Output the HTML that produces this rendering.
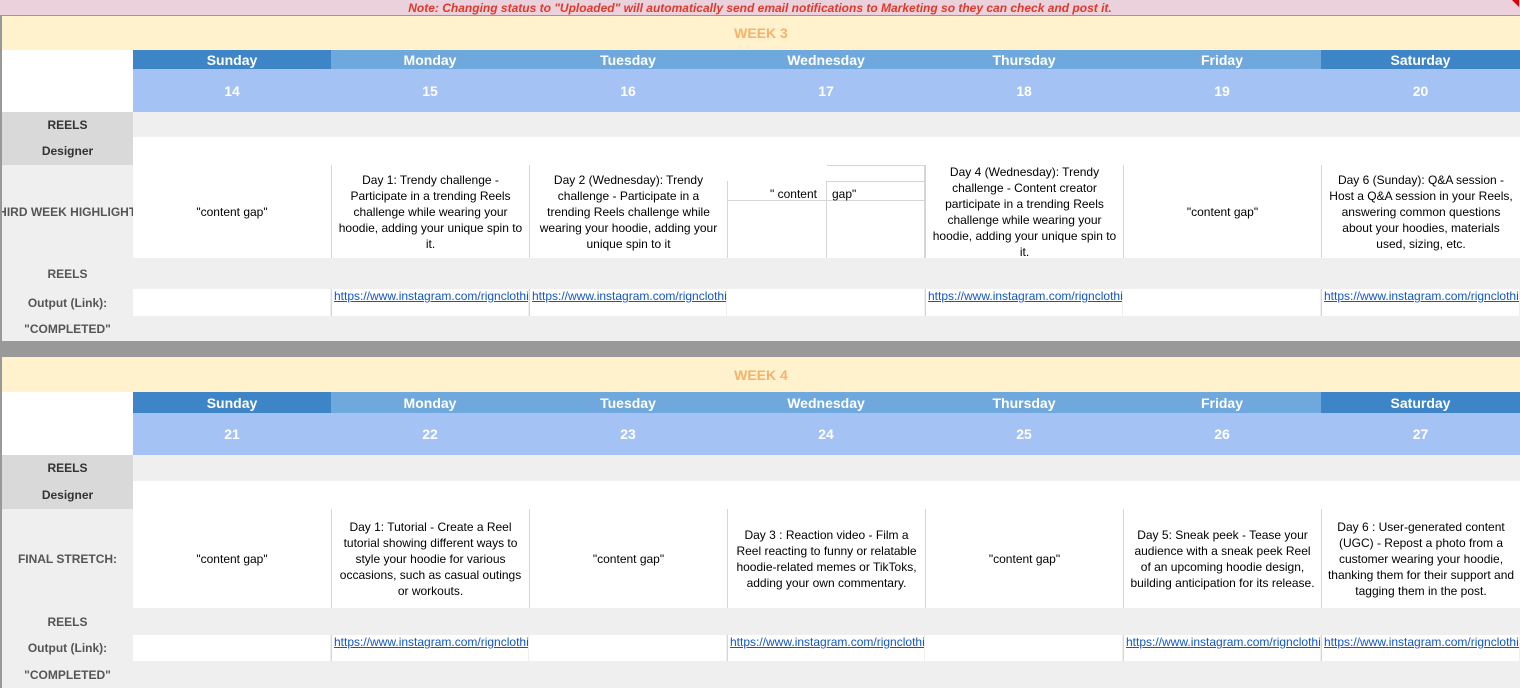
<!DOCTYPE html>
<html><head><meta charset="utf-8"><style>
*{margin:0;padding:0;box-sizing:border-box}
body{width:1520px;height:688px;overflow:hidden;background:#fff;font-family:"Liberation Sans",Arial,sans-serif;font-size:12px;color:#000;position:relative}
.a{position:absolute}
.c{display:flex;align-items:center;justify-content:center;text-align:center}
.hd{color:#fff;font-weight:bold;font-size:14px}
.lb{font-weight:bold;color:#333;font-size:12px}
.cell{background:#fff;border-left:1px solid #d6d6d6;line-height:16px;padding:0 5px}
.lnk{color:#1155cc;text-decoration:underline;white-space:nowrap;overflow:hidden;border-left:1px solid #d6d6d6;background:#fff;padding-left:2px;line-height:14px;font-size:12px}
</style></head><body>
<div class="a c" style="left:0;top:0;width:1520px;height:16px;background:#ead1dc;border-bottom:1px solid #999;color:#e0392b;font-weight:bold;font-style:italic;font-size:12px">Note: Changing status to "Uploaded" will automatically send email notifications to Marketing so they can check and post it.</div>
<div class="a" style="left:1512px;top:0;width:0;height:0;border-top:7px solid #d00;border-left:7px solid transparent"></div>
<div class="a" style="left:0;top:16px;width:2px;height:672px;background:#999"></div>
<div class="a" style="left:0;top:341px;width:1520px;height:16px;background:#999"></div>
<script>
const X=[133,331,529,727,925,1123,1321,1520];
const days=["Sunday","Monday","Tuesday","Wednesday","Thursday","Friday","Saturday"];
// H: [header, days, dates, reels, designer, content, reels2, output, completed]
function week(t,name,dates,label,texts,links,H){
 let s='';
 let y=t;
 s+=`<div class="a c" style="left:2px;top:${y}px;width:1518px;height:${H[0]}px;background:#fff2cc;color:#f6b26b;font-weight:bold;font-size:14px">${name}</div>`;
 y+=H[0];
 for(let i=0;i<7;i++){
  const w=X[i+1]-X[i];
  const bg=(i==0||i==6)?'#3d85c6':'#6fa8dc';
  s+=`<div class="a c hd" style="left:${X[i]}px;top:${y}px;width:${w}px;height:${H[1]}px;background:${bg}">${days[i]}</div>`;
  s+=`<div class="a c hd" style="left:${X[i]}px;top:${y+H[1]}px;width:${w}px;height:${H[2]}px;background:#a4c2f4">${dates[i]}</div>`;
 }
 y+=H[1]+H[2];
 s+=`<div class="a c lb" style="left:2px;top:${y}px;width:131px;height:${H[3]}px;background:#d9d9d9">REELS</div>`;
 s+=`<div class="a" style="left:133px;top:${y}px;width:1387px;height:${H[3]}px;background:#efefef"></div>`;
 y+=H[3];
 s+=`<div class="a c lb" style="left:2px;top:${y}px;width:131px;height:${H[4]}px;background:#d9d9d9">Designer</div>`;
 y+=H[4];
 const h=H[5];
 s+=`<div class="a c lb" style="left:2px;top:${y}px;width:131px;height:${h}px;background:#efefef;color:#555;white-space:nowrap;overflow:hidden">${label}</div>`;
 for(let i=0;i<7;i++){
  const w=X[i+1]-X[i];
  if(texts[i]===null)continue;
  s+=`<div class="a c cell" style="left:${X[i]}px;top:${y}px;width:${w}px;height:${h}px;${i==0?'border-left:none':''}">${texts[i]}</div>`;
 }
 y+=h;
 s+=`<div class="a" style="left:2px;top:${y}px;width:1518px;height:${H[6]+H[7]+H[8]}px;background:#efefef"></div>`;
 s+=`<div class="a c lb" style="left:2px;top:${y}px;width:131px;height:${H[6]}px;color:#555">REELS</div>`;
 y+=H[6];
 s+=`<div class="a c lb" style="left:2px;top:${y}px;width:131px;height:${H[7]}px;color:#555">Output (Link):</div>`;
 for(let i=0;i<7;i++){
  const w=X[i+1]-X[i];
  s+=`<div class="a ${links[i]?'lnk':''}" style="left:${X[i]}px;top:${y}px;width:${w-1}px;height:${H[7]}px;background:#fff">${links[i]?'https://www.instagram.com/rignclothing':''}</div>`;
 }
 y+=H[7];
 s+=`<div class="a c lb" style="left:2px;top:${y}px;width:131px;height:${H[8]}px;color:#555">"COMPLETED"</div>`;
 return s;
}
let out='';
out+=week(16,'WEEK 3',[14,15,16,17,18,19,20],'THIRD WEEK HIGHLIGHTS',
 ['"content gap"','Day 1: Trendy challenge - Participate in a trending Reels challenge while wearing your hoodie, adding your unique spin to it.','Day 2 (Wednesday): Trendy challenge - Participate in a trending Reels challenge while wearing your hoodie, adding your unique spin to it',null,'Day 4 (Wednesday): Trendy challenge - Content creator participate in a trending Reels challenge while wearing your hoodie, adding your unique spin to it.','"content gap"','Day 6 (Sunday): Q&amp;A session - Host a Q&amp;A session in your Reels, answering common questions about your hoodies, materials used, sizing, etc.'],
 [0,1,1,0,1,0,1],[34,19,43,25,28,93,31,27,25]);
out+=`<div class="a" style="left:727px;top:165px;width:198px;height:93px;background:#fff"></div>
<div class="a" style="left:827px;top:165px;width:98px;height:1px;background:#d6d6d6"></div>
<div class="a" style="left:727px;top:181px;width:1px;height:77px;background:#d6d6d6"></div>
<div class="a" style="left:826px;top:181px;width:1px;height:77px;background:#d6d6d6"></div>
<div class="a" style="left:827px;top:181px;width:98px;height:1px;background:#d6d6d6"></div>
<div class="a" style="left:727px;top:200px;width:198px;height:1px;background:#d6d6d6"></div>
<div class="a" style="left:924px;top:165px;width:1px;height:93px;background:#d6d6d6"></div>
<div class="a" style="left:728px;top:187px;width:89px;text-align:right;line-height:14px">" content</div>
<div class="a" style="left:832px;top:187px;line-height:14px">gap"</div>`;
out+=week(357,'WEEK 4',[21,22,23,24,25,26,27],'FINAL STRETCH:',
 ['"content gap"','Day 1: Tutorial - Create a Reel tutorial showing different ways to style your hoodie for various occasions, such as casual outings or workouts.','"content gap"','Day 3 : Reaction video - Film a Reel reacting to funny or relatable hoodie-related memes or TikToks, adding your own commentary.','"content gap"','Day 5: Sneak peek - Tease your audience with a sneak peek Reel of an upcoming hoodie design, building anticipation for its release.','Day 6 : User-generated content (UGC) - Repost a photo from a customer wearing your hoodie, thanking them for their support and tagging them in the post.'],
 [0,1,0,1,0,1,1],[35,21,42,26,28,99,27,26,27]);
document.body.insertAdjacentHTML('beforeend',out);
</script>
</body></html>
